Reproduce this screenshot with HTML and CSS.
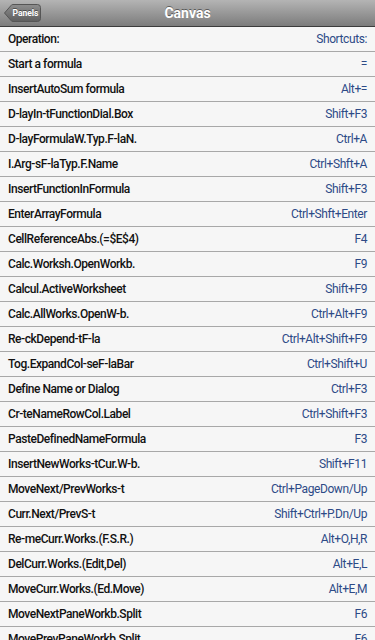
FILE: index.html
```html
<!DOCTYPE html>
<html lang="en">
<head>
    <meta charset="UTF-8">
    <meta name="viewport" content="width=device-width, initial-scale=1.0">
    <title>Canvas</title>
    <link rel="stylesheet" href="styles.css">
</head>
<body>

    <div class="header">
        <div class="header-left">
            <button class="back-btn">
                <svg class="back-shape" width="37" height="18" viewBox="0 0 37 18">
                    <defs>
                        <linearGradient id="btnGrad" x1="0" y1="0" x2="0" y2="1">
                            <stop offset="0" stop-color="#8e8e8e"/>
                            <stop offset="1" stop-color="#5e5e5e"/>
                        </linearGradient>
                    </defs>
                    <path d="M0.5 9 L7 1.5 Q7.6 0.5 8.8 0.5 L33.5 0.5 Q36.5 0.5 36.5 3.5 L36.5 14.5 Q36.5 17.5 33.5 17.5 L8.8 17.5 Q7.6 17.5 7 16.5 Z" fill="url(#btnGrad)" stroke="#555" stroke-width="1"/>
                </svg>
                <span>Panels</span>
            </button>
        </div>
        <div class="title">Canvas</div>
        <div></div>
    </div>

    <ul class="shortcuts">
        <li><span class="op">Operation:</span><span class="key">Shortcuts:</span></li>
        <li><span class="op">Start a formula</span><span class="key">=</span></li>
        <li><span class="op">InsertAutoSum formula</span><span class="key">Alt+=</span></li>
        <li><span class="op">D-layIn-tFunctionDial.Box</span><span class="key">Shift+F3</span></li>
        <li><span class="op">D-layFormulaW.Typ.F-laN.</span><span class="key">Ctrl+A</span></li>
        <li><span class="op">I.Arg-sF-laTyp.F.Name</span><span class="key">Ctrl+Shft+A</span></li>
        <li><span class="op">InsertFunctionInFormula</span><span class="key">Shift+F3</span></li>
        <li><span class="op">EnterArrayFormula</span><span class="key">Ctrl+Shft+Enter</span></li>
        <li><span class="op">CellReferenceAbs.(=$E$4)</span><span class="key">F4</span></li>
        <li><span class="op">Calc.Worksh.OpenWorkb.</span><span class="key">F9</span></li>
        <li><span class="op">Calcul.ActiveWorksheet</span><span class="key">Shift+F9</span></li>
        <li><span class="op">Calc.AllWorks.OpenW-b.</span><span class="key">Ctrl+Alt+F9</span></li>
        <li><span class="op">Re-ckDepend-tF-la</span><span class="key">Ctrl+Alt+Shift+F9</span></li>
        <li><span class="op">Tog.ExpandCol-seF-laBar</span><span class="key">Ctrl+Shift+U</span></li>
        <li><span class="op">Define Name or Dialog</span><span class="key">Ctrl+F3</span></li>
        <li><span class="op">Cr-teNameRowCol.Label</span><span class="key">Ctrl+Shift+F3</span></li>
        <li><span class="op">PasteDefinedNameFormula</span><span class="key">F3</span></li>
        <li><span class="op">InsertNewWorks-tCur.W-b.</span><span class="key">Shift+F11</span></li>
        <li><span class="op">MoveNext/PrevWorks-t</span><span class="key">Ctrl+PageDown/Up</span></li>
        <li><span class="op">Curr.Next/PrevS-t</span><span class="key">Shift+Ctrl+P.Dn/Up</span></li>
        <li><span class="op">Re-meCurr.Works.(F.S.R.)</span><span class="key">Alt+O,H,R</span></li>
        <li><span class="op">DelCurr.Works.(Edit,Del)</span><span class="key">Alt+E,L</span></li>
        <li><span class="op">MoveCurr.Works.(Ed.Move)</span><span class="key">Alt+E,M</span></li>
        <li><span class="op">MoveNextPaneWorkb.Split</span><span class="key">F6</span></li>
        <li><span class="op">MovePrevPaneWorkb.Split</span><span class="key">F6</span></li>
    </ul>

</body>
</html>
```

FILE: styles.css
```css
/* Page */
body {
    margin: 0;
    background-color: #f6f6f6;
    font-family: Roboto, "Liberation Sans", sans-serif;
    overflow: hidden;
}

/* Top Bar */
.header {
    height: 26px;
    display: grid;
    grid-template-columns: 1fr auto 1fr;
    align-items: center;
    background: linear-gradient(#b4b4b4, #7c7c7c);
    border-bottom: 1px solid #3c3c3c;
}

.header-left {
    padding-left: 4px;
    display: flex;
    align-items: center;
}

.back-btn {
    position: relative;
    width: 37px;
    height: 18px;
    padding: 0 0 0 6px;
    border: none;
    background: none;
    display: flex;
    align-items: center;
    justify-content: center;
}

.back-btn .back-shape {
    position: absolute;
    top: 0;
    left: 0;
}

.back-btn span {
    position: relative;
    color: #fff;
    font-family: Roboto, "Liberation Sans", sans-serif;
    font-size: 8.5px;
    font-weight: bold;
    text-shadow: 0 -1px 0 rgba(0, 0, 0, 0.4);
}

.title {
    color: #fff;
    font-size: 14px;
    font-weight: bold;
    text-shadow: 0 -1px 0 rgba(0, 0, 0, 0.45);
}

/* Shortcut List */
.shortcuts {
    list-style: none;
    margin: 0;
    padding: 0;
}

.shortcuts li {
    height: 24px;
    padding: 0 8px 0 8px;
    display: flex;
    align-items: center;
    justify-content: space-between;
    border-bottom: 1px solid #a8a8a8;
    font-size: 12px;
}

.shortcuts .op {
    color: #111;
    font-weight: 500;
    letter-spacing: -0.45px;
}

.shortcuts .key {
    color: #2d4a86;
    letter-spacing: -0.4px;
}
```
